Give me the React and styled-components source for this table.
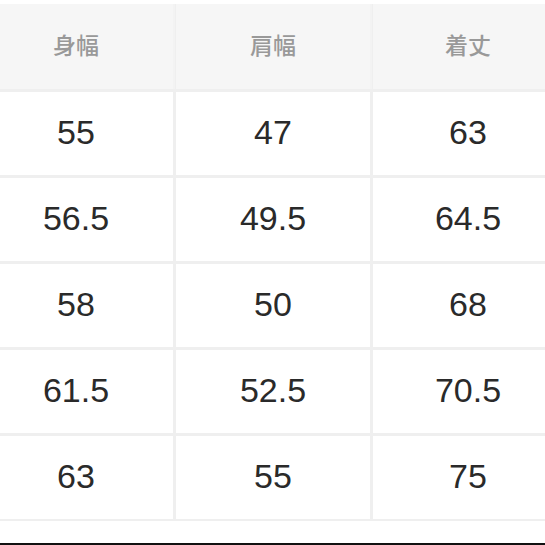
import React from 'react';
import styled, { createGlobalStyle } from 'styled-components';

const GlobalStyle = createGlobalStyle`
  html, body {
    margin: 0;
    padding: 0;
    background: #fff;
    overflow: hidden;
  }
  body {
    font-family: "Liberation Sans", "Noto Sans CJK JP", sans-serif;
  }
`;

const headers = ['身幅', '肩幅', '着丈'];

const rows = [
    ['55', '47', '63'],
    ['56.5', '49.5', '64.5'],
    ['58', '50', '68'],
    ['61.5', '52.5', '70.5'],
    ['63', '55', '75'],
];

const App = () => (
    <Page>
        <GlobalStyle />
        <SizeTable>
            {headers.map(h => (
                <HeadCell key={h}>{h}</HeadCell>
            ))}
            {rows.map((row, i) =>
                row.map((value, j) => (
                    <Cell key={`${i}-${j}`}>{value}</Cell>
                ))
            )}
        </SizeTable>
        <Bottom />
    </Page>
);

const Page = styled.div`
  width: 545px;
  height: 545px;
  display: flex;
  flex-direction: column;
  padding-top: 4px;
  box-sizing: border-box;
  overflow: hidden;
`;

const SizeTable = styled.div`
  display: grid;
  grid-template-columns: 194px 194px 190px;
  grid-template-rows: 85px repeat(5, 83px);
  gap: 3px;
  margin-left: -21px;
  width: 584px;
  padding-bottom: 2px;
  background: #efefef;
`;

const HeadCell = styled.div`
  display: flex;
  align-items: center;
  justify-content: center;
  background: #f6f6f6;
  box-shadow: 2px 0 0 #f3f3f3;
  color: #999;
  font-family: "Noto Sans CJK JP", sans-serif;
  font-size: 23px;
  font-weight: 500;
  padding-bottom: 6px;
`;

const Cell = styled.div`
  display: flex;
  align-items: center;
  justify-content: center;
  background: #fff;
  color: #2a2a2a;
  font-size: 34px;
  padding-bottom: 3px;
`;

const Bottom = styled.div`
  margin-top: auto;
  height: 2px;
  background: #111;
`;

export default App;
